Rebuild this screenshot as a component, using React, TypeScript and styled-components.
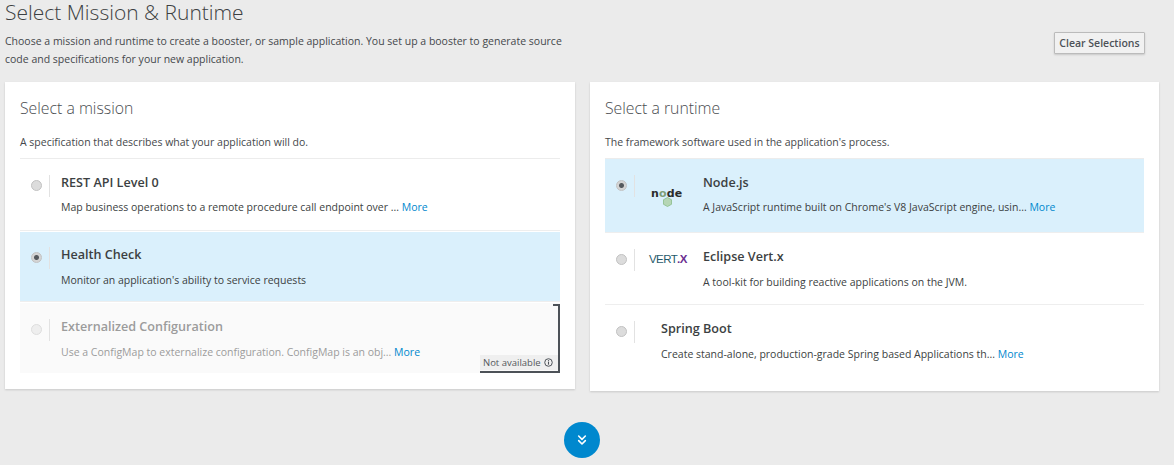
import React from 'react'
import styled, { createGlobalStyle } from 'styled-components'
import { ChevronsDown } from 'lucide-react'

const GlobalStyle = createGlobalStyle`
  html, body { margin: 0; padding: 0; background: #ebebeb; }
  body { font-family: "Open Sans", "Liberation Sans", sans-serif; color: #3c3f42; overflow: hidden; }
`

const Page = styled.div`
  width: 1174px;
  height: 465px;
  box-sizing: border-box;
  padding: 0 15px 0 5px;
  overflow: hidden;
`

const Title = styled.h1`
  margin: 0;
  height: 27px;
  font-size: 21px;
  line-height: 25px;
  font-weight: 300;
  color: #3c3f42;
`

const Intro = styled.div`
  display: flex;
  justify-content: space-between;
  align-items: flex-start;
  height: 55px;
`

const IntroText = styled.p`
  margin: 5px 0 0;
  width: 565px;
  font-size: 10.5px;
  line-height: 18px;
  color: #45484b;
`

const ClearButton = styled.button`
  margin: 5px 14px 0 0;
  width: 91px;
  height: 22px;
  padding: 0;
  font-family: inherit;
  font-size: 10.5px;
  font-weight: 600;
  color: #4d5258;
  background: #f1f1f1;
  border: 1px solid #bbb;
  border-radius: 1px;
  box-shadow: 0 1px 2px rgba(0, 0, 0, 0.15);
`

const Columns = styled.div`
  display: grid;
  grid-template-columns: 570px 569px;
  gap: 15px;
  align-items: start;
`

const Card = styled.section<{ $height: number }>`
  height: ${p => p.$height}px;
  box-sizing: border-box;
  background: #fff;
  padding: 0 15px;
  box-shadow: 0 1px 2px rgba(0, 0, 0, 0.15);
`

const CardTitle = styled.h2`
  margin: 0;
  padding-top: 16px;
  height: 29px;
  font-size: 15.8px;
  line-height: 20px;
  font-weight: 300;
  color: #4a4d50;
`

const CardHint = styled.p`
  margin: 6px 0 0;
  height: 25px;
  font-size: 10.5px;
  line-height: 18px;
  color: #45484b;
  border-bottom: 1px solid #ececec;
`

const Option = styled.div<{ $selected?: boolean; $disabled?: boolean; $height: number; $inset: number }>`
  position: relative;
  display: grid;
  grid-template-columns: 29px auto 1fr;
  align-items: start;
  height: ${p => p.$height}px;
  box-sizing: border-box;
  margin-bottom: 1px;
  padding-top: ${p => p.$inset}px;
  border-bottom: 1px solid #eeeeee;
  background: ${p => (p.$selected ? '#daf0fc' : p.$disabled ? '#fafafa' : 'transparent')};
  background-clip: padding-box;
  color: ${p => (p.$disabled ? '#9c9c9c' : 'inherit')};
  &:last-child {
    border-bottom-color: transparent;
  }
`

const RadioCell = styled.div`
  width: 29px;
  height: 22px;
  display: flex;
  justify-content: flex-end;
  align-items: center;
  border-right: 1px solid #e2e2e2;
`

const Radio = styled.span<{ $checked?: boolean; $disabled?: boolean }>`
  width: 9px;
  height: 9px;
  margin: 0 7px 2px 0;
  border-radius: 50%;
  border: 1px solid ${p => (p.$disabled ? '#dedede' : '#c2c2c2')};
  background: ${p =>
    p.$checked
      ? 'radial-gradient(circle, #55595d 0 2px, #d4d4d4 3px)'
      : p.$disabled
        ? '#eeeeee'
        : '#dcdcdc'};
`

const LogoCell = styled.div<{ $width: number }>`
  width: ${p => p.$width}px;
  height: 22px;
`

const Body = styled.div`
  min-width: 0;
`

const OptionName = styled.div`
  margin-top: -1px;
  font-size: 12.6px;
  line-height: 18px;
  font-weight: 600;
`

const OptionText = styled.div<{ $gap: number }>`
  margin-top: ${p => p.$gap}px;
  font-size: 10.5px;
  line-height: 18px;
`

const More = styled.a`
  color: #0088ce;
`

const Unavailable = styled.div`
  position: absolute;
  top: 1px;
  right: 0;
  bottom: 0;
  width: 80px;
  box-sizing: border-box;
  border-right: 2px solid #4d5258;
  border-bottom: 2px solid #4d5258;
  display: flex;
  align-items: flex-end;
  pointer-events: none;
  &::before {
    content: '';
    position: absolute;
    top: 0;
    right: 0;
    width: 5px;
    border-top: 2px solid #4d5258;
  }
`

const UnavailableTag = styled.div`
  display: flex;
  align-items: center;
  gap: 3px;
  height: 15px;
  width: 100%;
  box-sizing: border-box;
  padding-left: 3px;
  margin-bottom: 1px;
  font-size: 9.5px;
  line-height: 14px;
  color: #54585c;
  background: #efefef;
`

const InfoIcon = styled.svg`
  width: 9px;
  height: 9px;
  flex: none;
`

const NodeMark = styled.div`
  position: relative;
  margin: 13px 0 0 17px;
  width: 34px;
  font-family: "DejaVu Sans", sans-serif;
  font-weight: 700;
  font-size: 11px;
  letter-spacing: 0.2px;
  color: #2b2b2b;
  line-height: 12px;
  span { color: #7f9f77; }
`

const NodeHex = styled.svg`
  position: absolute;
  left: 12px;
  top: 9px;
  width: 9px;
  height: 10px;
`

const VertMark = styled.div`
  margin: 4px 0 0 15px;
  font-family: "Liberation Sans", sans-serif;
  font-size: 11.5px;
  letter-spacing: -0.6px;
  color: #1f5a6b;
  span { color: #6b2f91; font-weight: 700; }
`

const Footer = styled.div`
  display: flex;
  justify-content: center;
  padding-top: 31px;
`

const NextButton = styled.button`
  width: 36px;
  height: 36px;
  padding: 0;
  border: 0;
  border-radius: 50%;
  color: #fff;
  background: #0088ce;
  display: flex;
  align-items: center;
  justify-content: center;
`

type Item = {
  name: string
  text: string
  more?: boolean
  selected?: boolean
  disabled?: boolean
  height: number
  inset: number
  gap: number
  indent: number
  logo?: React.ReactNode
}

const missions: Item[] = [
  { name: 'REST API Level 0', text: 'Map business operations to a remote procedure call endpoint over ...', more: true, height: 72, inset: 16, gap: 6, indent: 12 },
  { name: 'Health Check', text: "Monitor an application's ability to service requests", selected: true, height: 70, inset: 15, gap: 7, indent: 12 },
  { name: 'Externalized Configuration', text: 'Use a ConfigMap to externalize configuration. ConfigMap is an obj...', more: true, disabled: true, height: 71, inset: 16, gap: 7, indent: 12 },
]

const NodeLogo = () => (
  <NodeMark>
    n<span>o</span>de
    <NodeHex viewBox="0 0 10 11">
      <polygon points="5,0.5 9.5,3 9.5,8 5,10.5 0.5,8 0.5,3" fill="#b5d6b5" stroke="#8fbf8f" />
    </NodeHex>
  </NodeMark>
)

const VertLogo = () => (
  <VertMark>VERT<span>.X</span></VertMark>
)

const runtimes: Item[] = [
  { name: 'Node.js', text: "A JavaScript runtime built on Chrome's V8 JavaScript engine, usin...", more: true, selected: true, height: 74, inset: 16, gap: 6, indent: 69, logo: <NodeLogo /> },
  { name: 'Eclipse Vert.x', text: 'A tool-kit for building reactive applications on the JVM.', height: 71, inset: 15, gap: 7, indent: 69, logo: <VertLogo /> },
  { name: 'Spring Boot', text: 'Create stand-alone, production-grade Spring based Applications th...', more: true, height: 70, inset: 15, gap: 7, indent: 27 },
]

function OptionRow({ item }: { item: Item }) {
  return (
    <Option $selected={item.selected} $disabled={item.disabled} $height={item.height} $inset={item.inset}>
      <RadioCell>
        <Radio $checked={item.selected} $disabled={item.disabled} />
      </RadioCell>
      <LogoCell $width={item.indent}>{item.logo}</LogoCell>
      <Body>
        <OptionName>{item.name}</OptionName>
        <OptionText $gap={item.gap}>
          {item.text}
          {item.more && <More> More</More>}
        </OptionText>
      </Body>
      {item.disabled && (
        <Unavailable>
          <UnavailableTag>
            Not available
            <InfoIcon viewBox="0 0 10 10">
              <circle cx="5" cy="5" r="4.2" fill="none" stroke="#4d5258" strokeWidth="1.1" />
              <rect x="4.4" y="4.2" width="1.2" height="3.2" fill="#4d5258" />
              <rect x="4.4" y="2.4" width="1.2" height="1.2" fill="#4d5258" />
            </InfoIcon>
          </UnavailableTag>
        </Unavailable>
      )}
    </Option>
  )
}

export default function App() {
  return (
    <Page>
      <GlobalStyle />
      <Title>Select Mission &amp; Runtime</Title>
      <Intro>
        <IntroText>
          Choose a mission and runtime to create a booster, or sample application. You set up a booster to generate
          source code and specifications for your new application.
        </IntroText>
        <ClearButton>Clear Selections</ClearButton>
      </Intro>
      <Columns>
        <Card $height={307}>
          <CardTitle>Select a mission</CardTitle>
          <CardHint>A specification that describes what your application will do.</CardHint>
          {missions.map(m => <OptionRow key={m.name} item={m} />)}
        </Card>
        <Card $height={309}>
          <CardTitle>Select a runtime</CardTitle>
          <CardHint>The framework software used in the application's process.</CardHint>
          {runtimes.map(r => <OptionRow key={r.name} item={r} />)}
        </Card>
      </Columns>
      <Footer>
        <NextButton aria-label="Next">
          <ChevronsDown size={16} strokeWidth={2.4} />
        </NextButton>
      </Footer>
    </Page>
  )
}
